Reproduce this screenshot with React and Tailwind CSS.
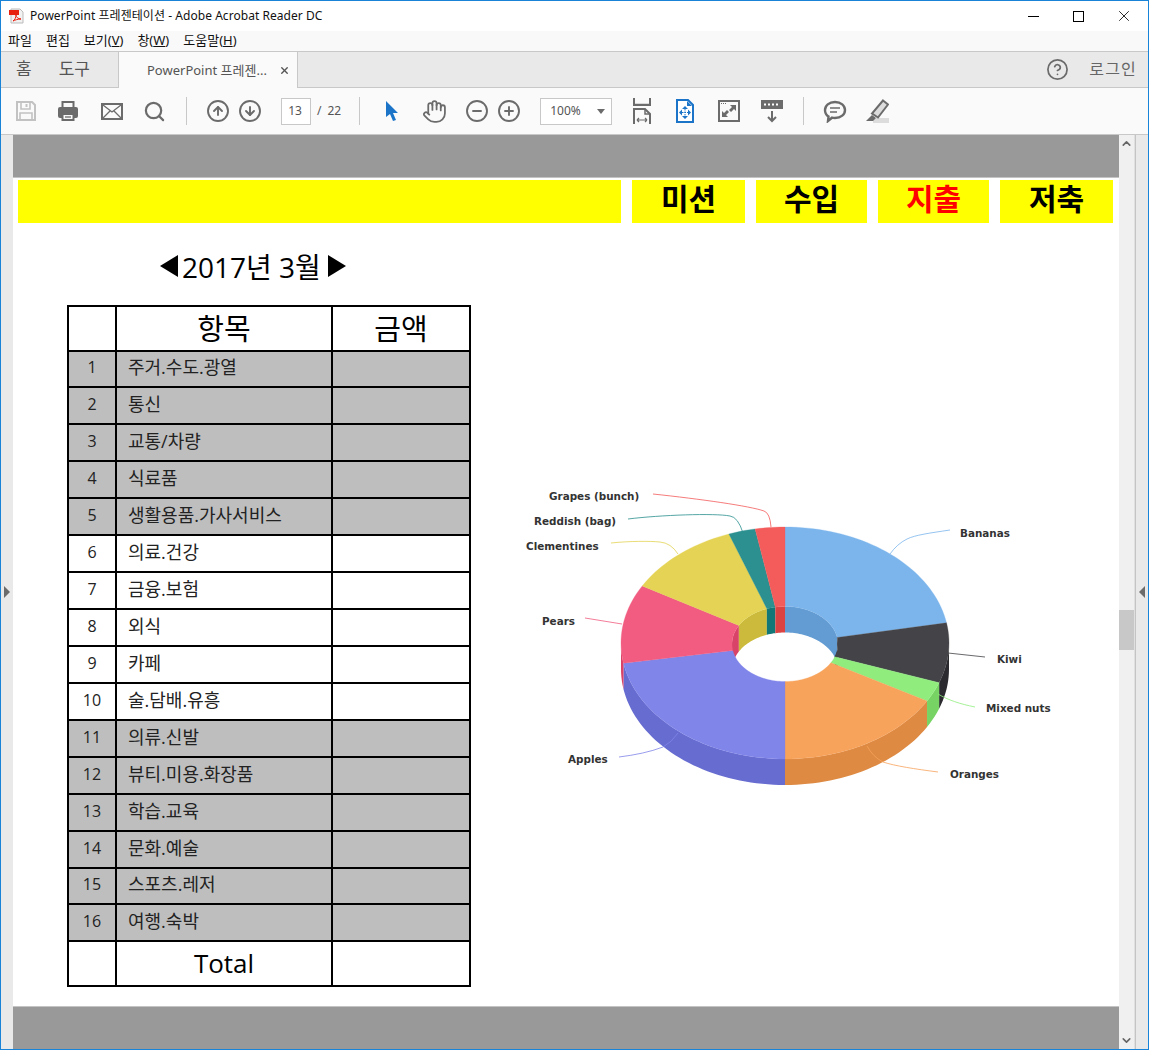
import React from 'react';
import { Search, CircleArrowUp, CircleArrowDown, Hand, CircleMinus, CirclePlus, CircleHelp, X, ChevronUp, ChevronDown } from 'lucide-react';

const ui = { fontFamily: '"Noto Sans", "Noto Sans CJK KR", sans-serif' };
const sheet = { fontFamily: '"Open Sans", "Noto Sans CJK KR", sans-serif' };

const rows = [
  ['주거.수도.광열', 1, 36], ['통신', 1, 37], ['교통/차량', 1, 37], ['식료품', 1, 37], ['생활용품.가사서비스', 1, 37],
  ['의료.건강', 0, 37], ['금융.보험', 0, 37], ['외식', 0, 37], ['카페', 0, 37], ['술.담배.유흥', 0, 37],
  ['의류.신발', 1, 37], ['뷰티.미용.화장품', 1, 37], ['학습.교육', 1, 37], ['문화.예술', 1, 37], ['스포츠.레저', 1, 36], ['여행.숙박', 1, 37],
];

// top face colour, wall colour, start and end angle on the ellipse
const slices = [
  ['#7cb5ec', '#639cd3', -90, -10],
  ['#434348', '#2a2a2f', -10, 20],
  ['#90ed7d', '#77d464', 20, 30],
  ['#f7a35c', '#de8a43', 30, 90],
  ['#8085e9', '#676cd0', 90, 170],
  ['#f15c80', '#d84367', 170, 209.5],
  ['#e4d354', '#cbba3b', 209.5, 250],
  ['#2b908f', '#127776', 250, 259.5],
  ['#f45b5b', '#db4242', 259.5, 270],
];

const arc = (cy, rx, ry, a, b) => {
  const pts = [];
  const n = Math.max(2, Math.ceil(Math.abs(b - a) / 2));
  for (let i = 0; i <= n; i++) {
    const t = ((a + ((b - a) * i) / n) * Math.PI) / 180;
    pts.push(`${(785 + rx * Math.cos(t)).toFixed(2)},${(cy + ry * Math.sin(t)).toFixed(2)}`);
  }
  return pts;
};

const connectors = [
  ['#f45b5b', 'M653 494C700 499 750 506 764 511Q770 513 771 527'],
  ['#2b908f', 'M628 519C660 515 715 513 730 516Q738 517 743 533'],
  ['#e4d354', 'M611 543C630 541 650 541 660 542Q671 543 678 554'],
  ['#f15c80', 'M585 618L622 624'],
  ['#8085e9', 'M619 757C635 755 650 752 663 747Q672 742 678 733'],
  ['#7cb5ec', 'M950 530C930 533 915 535 907 539Q897 544 890 554'],
  ['#434348', 'M985 657L948 653'],
  ['#90ed7d', 'M975 707C960 704 948 700 938 694'],
  ['#f7a35c', 'M938 772C915 769 895 766 883 762Q873 757 867 746'],
];

const labels = [
  ['Grapes (bunch)', 549, 500], ['Reddish (bag)', 534, 525], ['Clementines', 526, 550], ['Pears', 542, 625], ['Apples', 568, 763],
  ['Bananas', 960, 537], ['Kiwi', 997, 663], ['Mixed nuts', 986, 712], ['Oranges', 950, 778],
];

function Chart() {
  return (
    <svg viewBox="510 480 560 320" width="560" height="320" className="ml-[39px] mt-[175px] shrink-0">
      {slices.map(([, wall, a, b], i) => {
        // back part of the hole wall
        const from = a < 0 ? Math.max(a + 360, 180) : Math.max(a, 180);
        const to = a < 0 ? b + 360 : b;
        if (to <= from) return null;
        return <polygon key={`in${i}`} fill={wall} points={[...arc(644, 53, 37.5, from, to), ...arc(670, 53, 37.5, to, from)].join(' ')} />;
      })}
      {slices.map(([, wall, a, b], i) => {
        const from = Math.max(a, 0);
        const to = Math.min(b, 180);
        if (to <= from) return null;
        return <polygon key={`out${i}`} fill={wall} points={[...arc(643, 164, 116, from, to), ...arc(669, 164, 116, to, from)].join(' ')} />;
      })}
      {slices.map(([top, , a, b], i) => (
        <polygon key={`top${i}`} fill={top} stroke={top} strokeWidth="0.3" points={[...arc(643, 164, 116, a, b), ...arc(644, 53, 37.5, b, a)].join(' ')} />
      ))}
      {connectors.map(([c, d], i) => (
        <path key={i} d={d} fill="none" stroke={c} strokeWidth="1" opacity="0.8" />
      ))}
      {labels.map(([t, x, y]) => (
        <text key={t} x={x} y={y} fontSize="10.4" fontWeight="700" fill="#333" style={{ fontFamily: '"DejaVu Sans", sans-serif' }}>{t}</text>
      ))}
    </svg>
  );
}

function Icon({ children, w = 24, h = 24, className = '' }) {
  return <svg viewBox={`0 0 ${w} ${h}`} width={w} height={h} className={`shrink-0 ${className}`}>{children}</svg>;
}

function Toolbar() {
  const g = '#6b6b6b';
  return (
    <div className="h-[47px] bg-[#fafafa] border-b border-[#c8c8c8] flex items-center pl-[13px] text-[#555] text-[12px] shrink-0">
      <Icon w={22} h={22} className="ml-[1px]">
        <path d="M2 2h15l3 3v15H2z" fill="none" stroke="#c2c2c2" strokeWidth="2" />
        <path d="M6 2h9v7H6zM5 13h12v7H5z" fill="none" stroke="#c2c2c2" strokeWidth="1.6" />
        <path d="M11.500 4v3" stroke="#c2c2c2" strokeWidth="2" />
      </Icon>
      <Icon className="ml-[19px]">
        <path d="M4 8h16a2 2 0 012 2v7a2 2 0 01-2 2h-2v-4H6v4H4a2 2 0 01-2-2v-7a2 2 0 012-2z" fill={g} />
        <path d="M6.500 8V3h11v5" fill="none" stroke={g} strokeWidth="2" />
        <path d="M6.500 15h11v6h-11z" fill="#fafafa" stroke={g} strokeWidth="2" />
        <path d="M9 18h6" stroke={g} strokeWidth="1.300" />
      </Icon>
      <Icon className="ml-[20px]">
        <rect x="2" y="5" width="20" height="15" fill="none" stroke={g} strokeWidth="2" />
        <path d="M3 6l9 7 9-7M3 19l7-7M21 19l-7-7" fill="none" stroke={g} strokeWidth="1.300" />
      </Icon>
      <Search size={23} strokeWidth={2.3} color={g} className="ml-[19px] shrink-0" />
      <div className="w-px h-[28px] bg-[#c8c8c8] ml-[20px]" />
      <CircleArrowUp size={24} strokeWidth={1.9} color={g} className="ml-[19px] shrink-0" />
      <CircleArrowDown size={24} strokeWidth={1.9} color={g} className="ml-[8px] shrink-0" />
      <div className="ml-[19px] w-[30px] h-[27px] bg-white border border-[#c8c8c8] flex items-center justify-center pr-[2px]">13</div>
      <span className="ml-[6px]">/</span>
      <span className="ml-[6px]">22</span>
      <div className="w-px h-[28px] bg-[#c8c8c8] ml-[18px]" />
      <Icon w={14} h={22} className="ml-[25px]">
        <path d="M1 1l12 12H8l3 7-3 1-3-7-4 3z" fill="#1b74c8" />
      </Icon>
      <Hand size={25} strokeWidth={1.7} color={g} className="ml-[23px] shrink-0" />
      <CircleMinus size={24} strokeWidth={1.9} color={g} className="ml-[18px] shrink-0" />
      <CirclePlus size={24} strokeWidth={1.9} color={g} className="ml-[8px] shrink-0" />
      <div className="ml-[19px] w-[72px] h-[27px] bg-white border border-[#c8c8c8] flex items-center pl-[9px]">
        100%
        <span className="ml-auto mr-[6px] w-0 h-0 border-x-[4px] border-x-transparent border-t-[5px] border-t-[#6b6b6b]" />
      </div>
      <Icon w={20} h={26} className="ml-[20px]">
        <rect x="2" y="5" width="16" height="3" fill="#d8d8d8" />
        <path d="M2 0v7h16V0" fill="none" stroke={g} strokeWidth="2" />
        <path d="M2 26V11h11l5 5v10" fill="none" stroke={g} strokeWidth="2" />
        <path d="M13 11v5h5" fill="none" stroke={g} strokeWidth="1.500" />
        <path d="M5 22h10M5 22l2-2M5 22l2 2M15 22l-2-2M15 22l-2 2" stroke={g} strokeWidth="1.200" fill="none" />
      </Icon>
      <Icon w={20} h={24} className="ml-[23px]">
        <path d="M2 1h11l5 5v17H2z" fill="#fff" stroke="#1b74c8" strokeWidth="2" />
        <path d="M12 2v5h5z" fill="#1b74c8" />
        <path d="M10 7l-3 3h6zM10 20l-3-3h6zM4 13.500l3-3v6zM16 13.500l-3-3v6z" fill="#1b74c8" />
        <path d="M10 10v7M7 13.500h6" stroke="#1b74c8" strokeWidth="1" strokeDasharray="1.500 1" />
      </Icon>
      <Icon w={22} h={22} className="ml-[23px]">
        <rect x="1" y="1" width="20" height="20" fill="none" stroke={g} strokeWidth="2" />
        <path d="M3 3.500h5" stroke={g} strokeWidth="1" strokeDasharray="1 1" />
        <path d="M12 5h6v6l-2-2-3 3-2-2 3-3zM10 17H4v-6l2 2 3-3 2 2-3 3z" fill={g} />
      </Icon>
      <Icon w={22} h={24} className="ml-[21px]">
        <rect x="0" y="1" width="22" height="9" fill={g} />
        <path d="M3 5.500h2M7 5.500h2M11 5.500h2M15 5.500h2" stroke="#fff" strokeWidth="2" />
        <path d="M11 12v10M7 18l4 4 4-4" fill="none" stroke={g} strokeWidth="2" />
      </Icon>
      <div className="w-px h-[28px] bg-[#c8c8c8] ml-[20px]" />
      <Icon className="ml-[19px]">
        <path d="M12 3c6 0 10 3.500 10 8s-4 8-10 8c-1 0-2 0-3-.3L5 22l.5-4.500C3 16 2 14 2 11c0-4.500 4-8 10-8z" fill="none" stroke={g} strokeWidth="2.400" />
        <path d="M7 9h10M7 13h7" stroke={g} strokeWidth="1.500" />
      </Icon>
      <Icon className="ml-[18px]">
        <rect x="8" y="19" width="16" height="5" fill="#dcdcdc" />
        <path d="M18 1.500l5 4-10 13-6-4z" fill="#dcdcdc" stroke={g} strokeWidth="2" />
        <path d="M7 16l4 3-3 3H1z" fill={g} />
      </Icon>
    </div>
  );
}

function Sheet() {
  const th = 'border-2 border-black text-center font-normal text-black leading-none';
  const tabs = [['미션', 113, 11], ['수입', 111, 11], ['지출', 111, 11], ['저축', 113, 11]];
  return (
    <div className="w-[1106px] h-full flex flex-col bg-white shrink-0" style={sheet}>
      <div className="h-[43px] bg-[#999999] border-b border-[#c4c4c4] shrink-0" />
      <div className="flex-1 px-[5px] pt-[2px]">
        <div className="flex h-[43px]">
          <div className="w-[603px] bg-[#ffff00]" />
          {tabs.map(([t, w, m]) => (
            <div key={t} className={`bg-[#ffff00] flex items-center justify-center text-[30px] font-bold leading-none pb-[6px] ${t === '지출' ? 'text-[#ff0000]' : 'text-black'}`} style={{ width: w, marginLeft: m }}>
              {t}
            </div>
          ))}
        </div>
        <div className="h-[38px] mt-[24px] ml-[142px] flex items-center text-[28px] text-black leading-none">
          <span className="w-0 h-0 border-y-[11px] border-y-transparent border-r-[18px] border-r-black" />
          <span className="ml-[4px] pt-[2px]">2017년 3월</span>
          <span className="ml-[7px] w-0 h-0 border-y-[11px] border-y-transparent border-l-[18px] border-l-black" />
        </div>
        <div className="flex mt-[20px] ml-[49px]">
          <table className="border-collapse w-[402px] table-fixed shrink-0">
            <colgroup>
              <col className="w-[48px]" />
              <col className="w-[216px]" />
              <col className="w-[138px]" />
            </colgroup>
            <tbody>
              <tr className="h-[45px]">
                <td className={th} />
                <td className={`${th} text-[29px]`}>항목</td>
                <td className={`${th} text-[29px]`}>금액</td>
              </tr>
              {rows.map(([name, shaded, h], i) => (
                <tr key={name} style={{ height: h }} className={shaded ? 'bg-[#bebebe]' : 'bg-white'}>
                  <td className="border-2 border-black text-center text-[16px] text-[#222] pb-[4px] leading-none">{i + 1}</td>
                  <td className="border-2 border-black pl-[11px] text-[18px] text-[#222] pb-[4px] leading-none">{name}</td>
                  <td className="border-2 border-black" />
                </tr>
              ))}
              <tr className="h-[45px]">
                <td className={th} />
                <td className={`${th} text-[26px] pb-[2px]`}>Total</td>
                <td className={th} />
              </tr>
            </tbody>
          </table>
          <Chart />
        </div>
      </div>
      <div className="h-[43px] bg-[#999999] border-t border-[#c4c4c4] shrink-0" />
    </div>
  );
}

export default function App() {
  return (
    <div className="w-[1152px] h-[1050px] bg-white overflow-hidden" style={ui}>
      <div className="w-[1149px] h-[1050px] border border-[#1883d7] flex flex-col text-[#222]">
        <div className="h-[30px] bg-white flex items-center pl-[8px] shrink-0">
          <Icon w={16} h={16}>
            <path d="M2 1h9l3 3v11H2z" fill="#f2f2f2" stroke="#bbb" strokeWidth="1" />
            <rect x="0" y="2" width="10" height="5" fill="#e8200e" />
            <path d="M4 13c2-1 3-4 3-6 0 2 2 4 5 4-3 0-6 1-8 2z" fill="none" stroke="#e8200e" strokeWidth="1" />
          </Icon>
          <span className="ml-[5px] text-[12px] text-[#111] tracking-[0.05px]">PowerPoint 프레젠테이션 - Adobe Acrobat Reader DC</span>
          <div className="ml-auto flex items-center text-black">
            <span className="w-[11px] h-px bg-black mr-[34px]" />
            <span className="w-[11px] h-[11px] border border-black mr-[31px]" />
            <X size={18} strokeWidth={1.1} className="mr-[15px]" />
          </div>
        </div>
        <div className="h-[20px] bg-[#f9f9f9] flex items-center pl-[7px] gap-[14px] text-[13px] leading-none text-[#111] pb-[2px] shrink-0">
          <span>파일</span>
          <span>편집</span>
          <span>보기(<u>V</u>)</span>
          <span>창(<u>W</u>)</span>
          <span>도움말(<u>H</u>)</span>
        </div>
        <div className="h-[37px] bg-[#e9e9e9] border-y border-[#c8c8c8] flex items-stretch text-[#555] shrink-0">
          <div className="flex items-center w-[117px] pl-[15px] gap-[27px] text-[17px] pb-[2px]">
            <span>홈</span>
            <span>도구</span>
          </div>
          <div className="w-[180px] bg-[#fafafa] border-x border-[#c8c8c8] -mb-px flex items-center pl-[28px] text-[13px] pt-[1px]">
            PowerPoint 프레젠...
            <X size={11} strokeWidth={3} className="ml-[12px] text-[#555]" />
          </div>
          <div className="ml-auto flex items-center pr-[11px]">
            <CircleHelp size={23} strokeWidth={1.8} color="#6b6b6b" />
            <span className="ml-[20px] text-[16px] text-[#666] tracking-[1.2px] pb-[2px]">로그인</span>
          </div>
        </div>
        <Toolbar />
        <div className="flex-1 flex min-h-0 bg-[#e9e9e9]">
          <div className="w-[12px] flex items-center justify-center shrink-0">
            <span className="w-0 h-0 border-y-[6px] border-y-transparent border-l-[6px] border-l-[#6b6b6b]" />
          </div>
          <Sheet />
          <div className="w-[16px] bg-[#f0f0f0] border-r border-[#e0e0e0] flex flex-col items-center shrink-0">
            <ChevronUp size={13} strokeWidth={3} color="#666" className="mt-[2px]" />
            <div className="w-full h-[40px] bg-[#c8c8c8] mt-[460px]" />
            <ChevronDown size={13} strokeWidth={3} color="#666" className="mt-auto mb-[2px]" />
          </div>
          <div className="flex-1 border-l border-[#c4c4c4] flex items-center justify-center">
            <span className="w-0 h-0 border-y-[6px] border-y-transparent border-r-[6px] border-r-[#6b6b6b]" />
          </div>
        </div>
      </div>
    </div>
  );
}
